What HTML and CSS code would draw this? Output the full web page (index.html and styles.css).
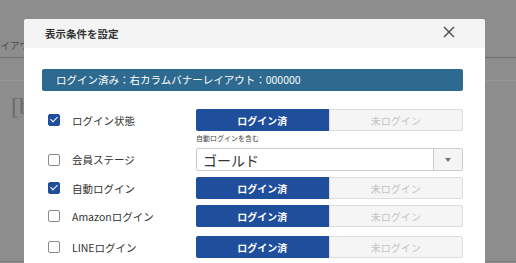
FILE: index.html
```html
<!DOCTYPE html>
<html lang="ja">
<head>
  <meta charset="UTF-8">
  <meta name="viewport" content="width=device-width, initial-scale=1.0">
  <title>表示条件を設定</title>
  <link rel="stylesheet" href="styles.css">
</head>
<body>
<div class="page">
  <div class="page-tabs">
    <span class="page-tab">レイアウト</span>
  </div>
  <div class="page-body">
    <span class="page-code">[b</span>
  </div>
</div>

<div class="modal">
  <div class="modal-header">
    <span class="modal-title">表示条件を設定</span>
    <svg class="modal-close" width="12" height="12" viewBox="0 0 12 12">
      <path d="M1 1 L11 11 M11 1 L1 11" stroke="#555" stroke-width="1.5" fill="none"/>
    </svg>
  </div>
  <div class="modal-body">
    <div class="banner">ログイン済み：右カラムバナーレイアウト：000000</div>

    <div class="row">
      <label class="check-label"><span class="check checked"></span>ログイン状態</label>
      <div class="field">
        <div class="toggle">
          <button class="on">ログイン済</button>
          <button class="off">未ログイン</button>
        </div>
        <div class="note">自動ログインを含む</div>
      </div>
    </div>

    <div class="row row-select">
      <label class="check-label"><span class="check"></span>会員ステージ</label>
      <div class="field">
        <div class="select">
          <span class="select-value">ゴールド</span>
          <span class="select-arrow"></span>
        </div>
      </div>
    </div>

    <div class="row">
      <label class="check-label"><span class="check checked"></span>自動ログイン</label>
      <div class="field">
        <div class="toggle">
          <button class="on">ログイン済</button>
          <button class="off">未ログイン</button>
        </div>
      </div>
    </div>

    <div class="row">
      <label class="check-label"><span class="check"></span>Amazonログイン</label>
      <div class="field">
        <div class="toggle">
          <button class="on">ログイン済</button>
          <button class="off">未ログイン</button>
        </div>
      </div>
    </div>

    <div class="row row-last">
      <label class="check-label"><span class="check"></span>LINEログイン</label>
      <div class="field">
        <div class="toggle">
          <button class="on">ログイン済</button>
          <button class="off">未ログイン</button>
        </div>
      </div>
    </div>
  </div>
</div>
</body>
</html>
```

FILE: styles.css
```css
body {
  margin: 0;
  padding: 0;
  font-family: "Noto Sans CJK JP", "Noto Sans", sans-serif;
  color: #333;
  background: #8d8d8d;
  overflow: hidden;
}
.page {
  height: 263px;
}
.page-tabs {
  height: 57px;
  border-bottom: 1px solid #6e6e6e;
  position: relative;
}
.page-tab {
  position: absolute;
  left: -9px;
  top: 38px;
  font-size: 9.5px;
  color: #4a4a4a;
}
.page-body {
  height: 180px;
  margin-top: 22px;
  border-top: 1px solid #979797;
  border-bottom: 1px solid #7c7c7c;
  position: relative;
}
.page-code {
  position: absolute;
  left: 11px;
  top: 12px;
  font-family: "Liberation Serif", serif;
  font-size: 24px;
  color: #6a6a6a;
}

.modal {
  position: absolute;
  left: 24px;
  top: 19px;
  width: 461px;
  height: 244px;
  overflow: hidden;
  background: #fff;
  border-radius: 3px 3px 0 0;
}
.modal-header {
  height: 29px;
  background: #f4f4f4;
  display: flex;
  align-items: center;
  justify-content: space-between;
  padding: 0 30px 0 21px;
}
.modal-title {
  font-size: 10.5px;
  font-weight: bold;
  color: #333;
}
.modal-close {
  margin-top: -3px;
}
.modal-body {
  padding: 21px 22px 0 18px;
}
.banner {
  height: 22px;
  line-height: 22px;
  background: #2e6a8f;
  border-radius: 2px;
  color: #fff;
  font-size: 10.5px;
  padding-left: 14px;
}
.row {
  display: flex;
  margin-top: 6px;
}
.row:nth-child(2) {
  margin-top: 18px;
}
.row-last {
  margin-top: 9px;
}
.check-label {
  box-sizing: border-box;
  width: 154px;
  height: 22px;
  display: flex;
  align-items: center;
  font-size: 10.5px;
  color: #333;
  padding-left: 6px;
}
.check {
  width: 10px;
  height: 10px;
  border: 1.5px solid #8a8a8a;
  border-radius: 2px;
  margin-right: 12px;
  position: relative;
  flex: none;
}
.check.checked {
  background: #1f4f9c;
  border-color: #1f4f9c;
}
.check.checked::after {
  content: "";
  position: absolute;
  left: 3px;
  top: 0px;
  width: 3px;
  height: 6px;
  border: solid #fff;
  border-width: 0 1.5px 1.5px 0;
  transform: rotate(45deg);
}
.field {
  flex: 1;
}
.toggle {
  display: flex;
  height: 22px;
}
.toggle button {
  flex: 1;
  font-family: inherit;
  font-size: 10px;
  border: none;
  padding: 0;
  cursor: pointer;
}
.toggle .on {
  background: #1f4f9c;
  color: #fff;
  font-weight: bold;
  border-radius: 2px 0 0 2px;
}
.toggle .off {
  background: #f5f5f5;
  color: #c4c4c4;
  border: 1px solid #ddd;
  border-radius: 0 2px 2px 0;
}
.note {
  font-size: 7px;
  line-height: 8px;
  color: #444;
  margin-top: 3px;
  height: 8px;
}
.row-select .check-label {
  height: 23px;
}
.select {
  height: 21px;
  border: 1px solid #ccc;
  border-radius: 2px;
  display: flex;
  align-items: center;
}
.select-value {
  flex: 1;
  font-size: 14px;
  padding-left: 6px;
  color: #333;
}
.select-arrow {
  width: 28px;
  height: 21px;
  border-left: 1px solid #ccc;
  background: #f5f5f5;
  position: relative;
}
.select-arrow::after {
  content: "";
  position: absolute;
  left: 11px;
  top: 9px;
  border-left: 3.5px solid transparent;
  border-right: 3.5px solid transparent;
  border-top: 4px solid #777;
}
```
